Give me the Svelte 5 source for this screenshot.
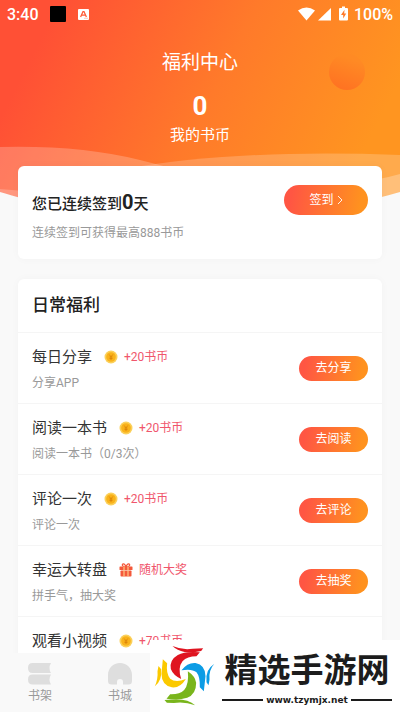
<script>
  const tasks = [
    { title: '每日分享', icon: 'coin', reward: '+20书币', note: '分享APP', action: '去分享' },
    { title: '阅读一本书', icon: 'coin', reward: '+20书币', note: '阅读一本书（0/3次）', action: '去阅读' },
    { title: '评论一次', icon: 'coin', reward: '+20书币', note: '评论一次', action: '去评论' },
    { title: '幸运大转盘', icon: 'gift', reward: '随机大奖', note: '拼手气，抽大奖', action: '去抽奖' },
    { title: '观看小视频', icon: 'coin', reward: '+70书币', note: '', action: '' }
  ];
</script>

<div class="app">
  <main>
    <header>
      <div class="status">
        <span class="clock">3:40</span>
        <span class="block"></span>
        <svg class="badge" viewBox="0 0 11 11" width="11" height="11" aria-hidden="true">
          <rect width="11" height="11" rx="1" fill="#fff" />
          <path d="M2.6 8 L5 2.6 H6 L8.4 8 M3.8 6.2 H7.2" fill="none" stroke="#ff5a36" stroke-width="1.3" />
          <path d="M6 9.3H10" stroke="#ffb09c" stroke-width=".7" />
        </svg>
        <span class="spacer"></span>
        <svg viewBox="0 0 52 16" width="52" height="16" aria-hidden="true">
          <path d="M0 4.5 Q8.5 -1.5 17 4.5 L8.5 14.5 Z" fill="#fff" />
          <path d="M33 2 V14.5 H20 Z" fill="#fff" />
          <path d="M44 .5 h3 v1.5 h2 a1 1 0 0 1 1 1 v10.500 a1 1 0 0 1 -1 1 h-7 a1 1 0 0 1 -1 -1 v-10.500 a1 1 0 0 1 1 -1 h2z" fill="#fff" />
          <path d="M46.500 3.800 L43 9 H45.200 V12.500 L48.200 7.500 H46.200 Z" fill="#ff7a2a" />
        </svg>
        <span class="level">100%</span>
      </div>
      <h1>福利中心</h1>
      <strong class="balance">0</strong>
      <p class="caption">我的书币</p>
      <span class="orb"></span>
      <svg class="waves" viewBox="0 0 400 60" preserveAspectRatio="none" aria-hidden="true">
        <path d="M0 8 Q80 6 140 21 Q190 33 240 48 V60 H0Z" fill="#fff" fill-opacity=".22" />
        <path d="M130 29 Q240 10 400 16 V60 H130Z" fill="#fff" fill-opacity=".2" />
        <path d="M0 50 L24 52 V60 H0Z" fill="#fff" fill-opacity=".2" />
        <path d="M340 46 Q376 42 400 35 V60 H340Z" fill="#fff" fill-opacity=".25" />
        <path d="M0 53 Q10 56 24 60 H0Z M400 53 Q390 56 374 60 H400Z" fill="#f9f9f9" />
      </svg>
    </header>

    <section class="card checkin">
      <div>
        <h2>您已连续签到<b>0</b>天</h2>
        <p>连续签到可获得最高888书币</p>
      </div>
      <button class="sign">签到<svg viewBox="0 0 6 10" width="6" height="10" aria-hidden="true"><path d="M1 1 L5 5 L1 9" fill="none" stroke="#fff" stroke-width=".9" /></svg></button>
    </section>

    <section class="card">
      <h2 class="heading">日常福利</h2>
      <ul>
        {#each tasks as task}
          <li>
            <div class="info">
              <div class="line">
                <h3>{task.title}</h3>
                {#if task.icon === 'coin'}
                  <svg viewBox="0 0 14 14" width="14" height="14" aria-hidden="true">
                    <circle cx="7" cy="7" r="6.500" fill="#fbd05a" />
                    <circle cx="7" cy="7" r="4.800" fill="#f9b21a" />
                    <path d="M5.200 4.500 L7 6.800 L8.800 4.500 M7 6.800 V10 M5.500 7 H8.500 M5.500 8.500 H8.500" fill="none" stroke="#d98208" stroke-width=".8" />
                  </svg>
                {:else}
                  <svg viewBox="0 0 14 14" width="14" height="14" aria-hidden="true">
                    <path d="M7 4 C3 4 2.500 1 4.300 .8 C6 .6 7 4 7 4 C7 4 8 .6 9.700 .8 C11.500 1 11 4 7 4Z" fill="none" stroke="#f4593b" stroke-width="1.200" />
                    <rect x=".5" y="3.500" width="13" height="3.500" rx=".6" fill="#f4593b" />
                    <rect x="1.500" y="7.500" width="11" height="6" rx=".8" fill="#f4593b" />
                    <path d="M5 3.500V13.500M9 3.500V13.500" stroke="#ffd08a" stroke-width="1.100" />
                  </svg>
                {/if}
                <span class="reward">{task.reward}</span>
              </div>
              <p>{task.note}</p>
            </div>
            <button aria-label={task.action || task.title}>{task.action}</button>
          </li>
        {/each}
      </ul>
    </section>
  </main>

  <nav>
    <a href="#shelf">
      <svg viewBox="0 0 24 22" width="24" height="22" aria-hidden="true">
        <path d="M4.500 0 H23 Q20 5 23 10 H4.500 Q0 10 0 5 Q0 0 4.500 0Z M4.500 11.500 H23 Q20 16.500 23 21.500 H4.500 Q0 21.500 0 16.500 Q0 11.500 4.500 11.500Z" fill="#dedede" />
      </svg>
      书架
    </a>
    <a href="#store">
      <svg viewBox="0 0 24 22" width="24" height="22" aria-hidden="true">
        <path d="M12 0 C19 0 24 5.500 24 12 V18 Q24 21.500 20.500 21.500 H15 V19 A3 3 0 0 0 9 19 V21.500 H3.500 Q0 21.500 0 18 V12 C0 5.500 5 0 12 0Z" fill="#dedede" />
      </svg>
      书城
    </a>
  </nav>

  <aside>
    <svg viewBox="15 0 200 216" width="67" height="72" aria-hidden="true">
      <g fill="#df1420">
        <path d="M82 18 Q112 31 143 26 L174 25 L168 33 Q142 39 118 36 Q96 32 82 18Z" />
        <path d="M164 37 L154 49 Q126 49 112 64 Q97 83 108 117 Q84 106 77 87 Q72 60 98 45 Q119 33 164 37Z" />
      </g>
      <g fill="#0c9ce5">
        <path d="M207 72 Q190 91 193 119 L190 136 L184 127 Q179 89 207 72Z" />
        <path d="M109 91 Q127 67 151 69 Q181 75 181 109 L176 154 L164 142 Q165 110 154 97 Q140 85 109 91Z" />
      </g>
      <g fill="#fbc900">
        <path d="M40 78 L48 88 Q51 123 29 139 Q39 117 37 94Z" />
        <path d="M53 58 L66 70 Q62 100 75 116 Q91 130 122 117 Q105 145 80 142 Q49 135 49 101Z" />
      </g>
      <g fill="#79b51c">
        <path d="M128 94 Q150 109 153 128 Q153 163 126 173 Q101 181 64 176 L75 163 Q103 164 117 150 Q132 133 128 94Z" />
        <path d="M58 180 L93 178 Q131 178 150 196 Q118 184 86 189 L65 188Z" />
      </g>
    </svg>
    <div class="brand">
      <strong>精选手游网</strong>
      <span class="site">www.tzymjx.net</span>
    </div>
  </aside>
</div>

<style>
  :global(body) { margin: 0; }
  .app {
    position: relative;
    display: flex;
    flex-direction: column;
    height: 100vh;
    overflow: hidden;
    background: #f9f9f9;
    color: #333;
    font-family: Roboto, "Noto Sans CJK SC", sans-serif;
  }
  h1, h2, h3, p, ul { margin: 0; padding: 0; font-weight: 400; }
  main { flex: 1; min-height: 0; overflow: hidden; }
  header {
    position: relative;
    display: flex;
    flex-direction: column;
    align-items: center;
    height: 199px;
    background: linear-gradient(117deg, #ff5035 12%, #ff7a2a 52%, #ff9520 88%);
    color: #fff;
  }
  .status {
    display: flex;
    align-items: center;
    align-self: stretch;
    height: 28px;
    padding: 0 7px;
    font-size: 16px;
    font-weight: 500;
  }
  .block { width: 16px; height: 16px; margin: 0 12px 0 11px; border-radius: 1px; background: #000; }
  .spacer { flex: 1; }
  .level { margin-left: 4px; }
  h1 { margin-top: 21px; font-size: 19px; line-height: 28px; }
  .balance { margin-top: 13px; font-size: 26px; line-height: 32px; }
  .orb {
    position: absolute;
    top: 54px;
    right: 35px;
    width: 36px;
    height: 36px;
    border-radius: 50%;
    background: linear-gradient(200deg, #ff8a24 20%, #ff7222 90%);
  }
  .waves { position: absolute; left: 0; bottom: 0; width: 100%; height: 60px; }
  .card {
    position: relative;
    margin: 0 18px 20px;
    border-radius: 6px;
    background: #fff;
    box-shadow: 0 0 8px rgba(0, 0, 0, .03);
  }
  .checkin {
    display: flex;
    align-items: flex-start;
    justify-content: space-between;
    height: 93px;
    box-sizing: border-box;
    margin-top: -33px;
    padding: 19px 14px 0;
  }
  .checkin h2 { font-size: 15px; font-weight: 500; line-height: 34px; color: #222; }
  .checkin b { font-size: 20px; }
  p { font-size: 12px; line-height: 18px; color: #999; }
  .checkin p { margin-top: 3px; }
  header .caption { font-size: 15px; line-height: 26px; color: #fff; }
  button {
    display: flex;
    align-items: center;
    justify-content: center;
    width: 69px;
    height: 25px;
    padding: 0;
    border: 0;
    border-radius: 15px;
    background: linear-gradient(100deg, #ff5643 10%, #ff921f 90%);
    color: #fff;
    font: 12px/20px Roboto, "Noto Sans CJK SC", sans-serif;
  }
  .sign { gap: 3px; width: 84px; height: 30px; }
  .heading { padding: 0 14px; font-size: 17px; font-weight: 500; line-height: 53px; color: #222; }
  ul { list-style: none; }
  li {
    display: flex;
    align-items: center;
    justify-content: space-between;
    height: 71px;
    box-sizing: border-box;
    padding: 0 14px;
    border-top: 1px solid #f5f5f5;
  }
  .line { display: flex; align-items: center; height: 26px; }
  h3 { margin-right: 12px; font-size: 15px; line-height: 26px; }
  .reward { margin-left: 6px; font-size: 12px; line-height: 20px; color: #f0566c; }
  li p { min-height: 18px; margin-top: 4px; }
  nav { display: flex; height: 59px; background: #f9f9f9; }
  nav a {
    display: flex;
    flex-direction: column;
    align-items: center;
    width: 20%;
    padding-top: 10px;
    color: #999;
    font-size: 12px;
    line-height: 22px;
    text-decoration: none;
  }
  aside {
    position: absolute;
    right: 0;
    bottom: 0;
    display: flex;
    width: 250px;
    height: 72px;
    background: #fff;
    color: #1c1c1c;
  }
  .brand { flex: 1; padding: 10px 8px 0 5px; }
  .brand strong { display: block; font-size: 33px; line-height: 42px; text-align: center; white-space: nowrap; }
  .site {
    display: flex;
    align-items: center;
    gap: 3px;
    font: bold 9px/16px "DejaVu Sans", sans-serif;
  }
  .site::before, .site::after { content: ""; flex: 1; height: 2px; background: #1c1c1c; }
</style>
